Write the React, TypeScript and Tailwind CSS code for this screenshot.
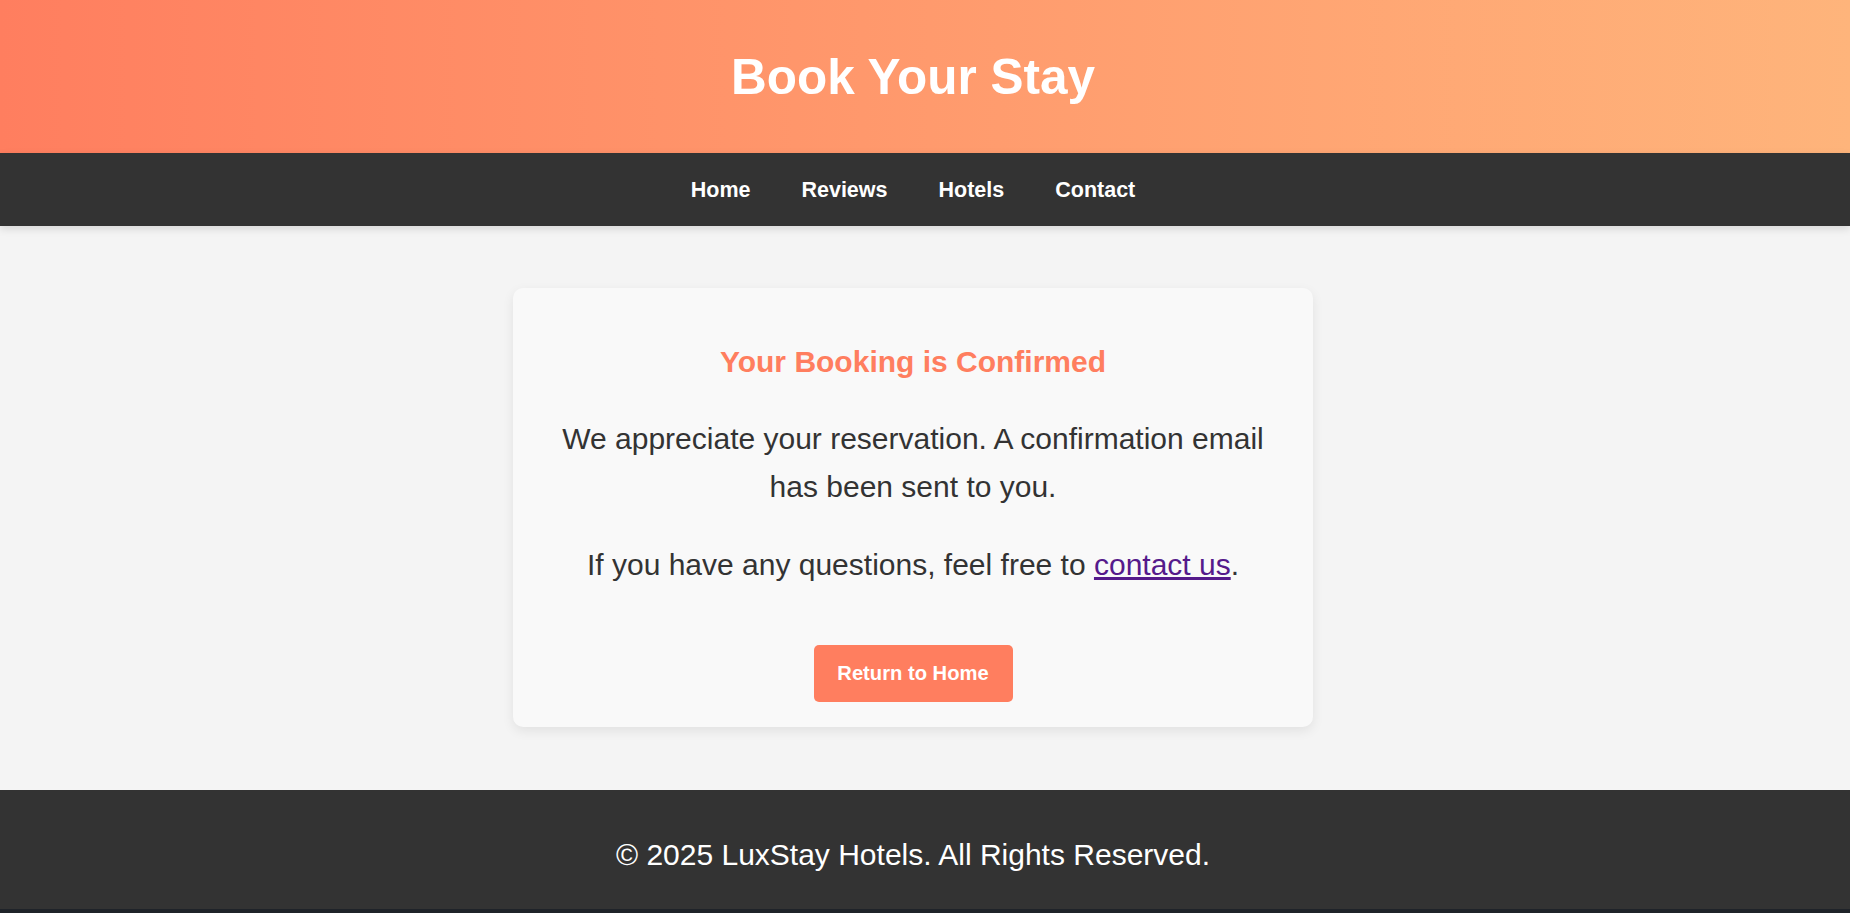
export default function App() {
  return (
    <div className="min-h-screen bg-[#f4f4f4] font-['Liberation_Sans',Arial,sans-serif] text-[#333]">
      {/* Header */}
      <header className="flex h-[153px] items-center justify-center bg-gradient-to-r from-[#ff7e5f] to-[#feb47b] pr-[24px]">
        <h1 className="text-[49.5px] font-bold leading-[56px] text-white">Book Your Stay</h1>
      </header>

      {/* Nav */}
      <nav className="relative z-10 flex h-[73px] items-center justify-center gap-[51px] bg-[#333] pr-[24px] shadow-[0_3px_8px_rgba(0,0,0,0.12)]">
        <a href="#" className="text-[21.5px] font-bold leading-[24px] text-white">Home</a>
        <a href="#" className="text-[21.5px] font-bold leading-[24px] text-white">Reviews</a>
        <a href="#" className="text-[21.5px] font-bold leading-[24px] text-white">Hotels</a>
        <a href="#" className="text-[21.5px] font-bold leading-[24px] text-white">Contact</a>
      </nav>

      {/* Confirmation */}
      <main className="flex justify-center pt-[62px] pb-[63px] pr-[24px]">
        <div className="flex w-[800px] flex-col items-center rounded-[10px] bg-[#f9f9f9] px-[40px] pt-[57px] pb-[25px] text-center shadow-[0_4px_12px_rgba(0,0,0,0.08)]">
          <h2 className="text-[30px] font-bold leading-[34px] text-[#ff7e5f]">Your Booking is Confirmed</h2>
          <p className="mt-[36px] text-[30px] leading-[48px]">
            We appreciate your reservation. A confirmation email has been sent to you.
          </p>
          <p className="mt-[30px] text-[30px] leading-[48px]">
            If you have any questions, feel free to{" "}
            <a href="#" className="text-[#551a8b] underline">contact us</a>.
          </p>
          <a
            href="#"
            className="mt-[56px] flex h-[57px] w-[199px] items-center justify-center rounded-[5px] bg-[#ff7e5f] text-[20.2px] font-bold text-white"
          >
            Return to Home
          </a>
        </div>
      </main>

      {/* Footer */}
      <footer className="bg-[#333] pt-[48px] pb-[37px] pr-[24px] text-center">
        <p className="text-[30px] leading-[34px] text-white">© 2025 LuxStay Hotels. All Rights Reserved.</p>
      </footer>
      <div className="h-[4px] bg-[#1f2329]" />
    </div>
  );
}
